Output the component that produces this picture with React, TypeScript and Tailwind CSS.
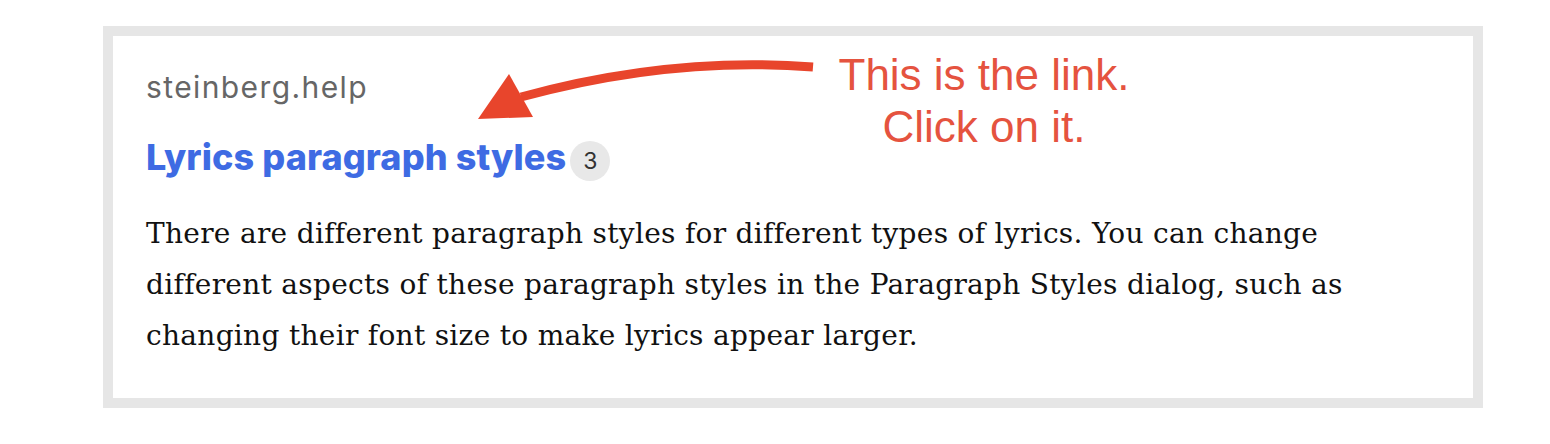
import React from "react";

export default function App() {
  return (
    <div className="relative h-[444px] w-[1550px] overflow-hidden bg-white pl-[103px] pt-[26px]">
      <div className="h-[382px] w-[1380px] border-[10px] border-[#e6e6e6] bg-white pl-[33px] pt-[33px]">
        <p className="font-['Inter',sans-serif] text-[30px] leading-[36px] tracking-[1.4px] text-[#666666]">
          steinberg.help
        </p>

        <div className="mt-[32px] flex h-[44px] items-start gap-[4px]">
          <a
            href="#"
            className="font-['Inter',sans-serif] text-[36px] font-extrabold leading-[40px] tracking-[0.1px] text-[#3e6be3]"
          >
            Lyrics paragraph styles
          </a>
          <span className="mt-[4px] flex h-[40px] w-[40px] items-center justify-center rounded-full bg-[#e8e8e8] font-['Inter',sans-serif] text-[23px] text-[#333333]">
            3
          </span>
        </div>

        <p className="mt-[27px] whitespace-nowrap font-['DejaVu_Serif',serif] text-[28px] leading-[51px] tracking-[0.3px] text-[#111111]">
          There are different paragraph styles for different types of lyrics. You can change
          <br />
          different aspects of these paragraph styles in the Paragraph Styles dialog, such as
          <br />
          changing their font size to make lyrics appear larger.
        </p>
      </div>

      {/* annotation overlay */}
      <svg
        aria-hidden
        className="absolute left-0 top-0"
        width="1550"
        height="444"
        viewBox="0 0 1550 444"
      >
        <path
          d="M813 67 Q670 56 521 97"
          fill="none"
          stroke="#e8452c"
          strokeWidth="9"
        />
        <polygon points="478,119 509,74 533,117" fill="#e8452c" />
      </svg>
      <div className="absolute left-[834px] top-[49px] w-[300px] text-center font-['Liberation_Sans',sans-serif] text-[44px] leading-[52px] text-[#e5533f]">
        This is the link.
        <br />
        Click on it.
      </div>
    </div>
  );
}
